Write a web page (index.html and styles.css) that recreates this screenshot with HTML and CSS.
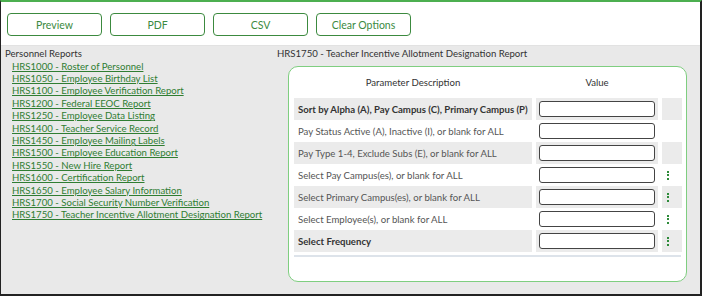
FILE: index.html
```html
<!DOCTYPE html>
<html lang="en">
<head>
    <meta charset="UTF-8">
    <title>HRS Reports</title>
    <link rel="stylesheet" href="styles.css">
</head>
<body>

<div class="frame">

    <!-- Toolbar -->
    <div class="toolbar">
        <button class="tool-btn">Preview</button>
        <button class="tool-btn">PDF</button>
        <button class="tool-btn">CSV</button>
        <button class="tool-btn">Clear Options</button>
    </div>

    <div class="main">
        <!-- Report list -->
        <div class="report-list">
            <div class="list-title">Personnel Reports</div>
            <a href="#">HRS1000 - Roster of Personnel</a>
            <a href="#">HRS1050 - Employee Birthday List</a>
            <a href="#">HRS1100 - Employee Verification Report</a>
            <a href="#">HRS1200 - Federal EEOC Report</a>
            <a href="#">HRS1250 - Employee Data Listing</a>
            <a href="#">HRS1400 - Teacher Service Record</a>
            <a href="#">HRS1450 - Employee Mailing Labels</a>
            <a href="#">HRS1500 - Employee Education Report</a>
            <a href="#">HRS1550 - New Hire Report</a>
            <a href="#">HRS1600 - Certification Report</a>
            <a href="#">HRS1650 - Employee Salary Information</a>
            <a href="#">HRS1700 - Social Security Number Verification</a>
            <a href="#">HRS1750 - Teacher Incentive Allotment Designation Report</a>
        </div>

        <!-- Parameters -->
        <div class="report-detail">
            <div class="report-title">HRS1750 - Teacher Incentive Allotment Designation Report</div>
            <div class="panel">
                <div class="param-head">
                    <div>Parameter Description</div>
                    <div>Value</div>
                    <div></div>
                </div>

                <div class="param-row shaded">
                    <div class="label bold">Sort by Alpha (A), Pay Campus (C), Primary Campus (P)</div>
                    <div class="value"><input type="text"></div>
                    <div class="extra"></div>
                </div>
                <div class="param-row">
                    <div class="label">Pay Status Active (A), Inactive (I), or blank for ALL</div>
                    <div class="value"><input type="text"></div>
                    <div class="extra"></div>
                </div>
                <div class="param-row shaded">
                    <div class="label">Pay Type 1-4, Exclude Subs (E), or blank for ALL</div>
                    <div class="value"><input type="text"></div>
                    <div class="extra"></div>
                </div>
                <div class="param-row">
                    <div class="label">Select Pay Campus(es), or blank for ALL</div>
                    <div class="value"><input type="text"></div>
                    <div class="extra"><span class="kebab"><i></i><i></i><i></i></span></div>
                </div>
                <div class="param-row shaded">
                    <div class="label">Select Primary Campus(es), or blank for ALL</div>
                    <div class="value"><input type="text"></div>
                    <div class="extra"><span class="kebab"><i></i><i></i><i></i></span></div>
                </div>
                <div class="param-row">
                    <div class="label">Select Employee(s), or blank for ALL</div>
                    <div class="value"><input type="text"></div>
                    <div class="extra"><span class="kebab"><i></i><i></i><i></i></span></div>
                </div>
                <div class="param-row shaded">
                    <div class="label bold">Select Frequency</div>
                    <div class="value"><input type="text"></div>
                    <div class="extra"><span class="kebab"><i></i><i></i><i></i></span></div>
                </div>

                <div class="panel-rule"></div>
            </div>
        </div>
    </div>

</div>

</body>
</html>
```

FILE: styles.css
```css
* {
    box-sizing: border-box;
}

body {
    margin: 0;
    font-family: Lato, "Open Sans", sans-serif;
    font-size: 9.6px;
    color: #333;
}

.frame {
    width: 702px;
    height: 296px;
    border-top: 2px solid #4caf50;
    border-left: 1px solid #222;
    border-right: 2px solid #222;
    border-bottom: 2px solid #222;
    background-color: #e9e9e9;
    display: flex;
    flex-direction: column;
    overflow: hidden;
}

/* Toolbar */
.toolbar {
    height: 44px;
    background-color: #fff;
    border-bottom: 1px solid #e2e2e2;
    display: flex;
    gap: 8px;
    padding: 11px 0 0 6px;
}

.tool-btn {
    width: 95px;
    height: 23px;
    background-color: #fff;
    border: 1px solid #3c8a3f;
    border-radius: 4px;
    color: #3c8a3f;
    font-family: inherit;
    font-size: 10.5px;
    padding: 0;
}

.main {
    flex: 1;
    display: flex;
}

/* Report list */
.report-list {
    width: 276px;
    padding: 2px 0 0 4px;
    display: flex;
    flex-direction: column;
}

.list-title {
    color: #333;
    line-height: 12px;
    margin-bottom: 0.5px;
}

.report-list a {
    color: #2f7d32;
    margin-left: 7px;
    line-height: 12.4px;
    text-decoration: underline;
}

/* Parameters */
.report-detail {
    flex: 1;
    padding: 2px 13px 0 0;
}

.report-title {
    color: #333;
    line-height: 12px;
}

.panel {
    margin: 6px 0 0 11px;
    height: 216px;
    background-color: #fff;
    border: 1.5px solid #7fce80;
    border-radius: 10px;
    padding: 10px 4px 0 5px;
}

.param-head,
.param-row {
    display: grid;
    grid-template-columns: 238px 122px 20px;
    column-gap: 4px;
}

.param-head {
    height: 12px;
    line-height: 12px;
    margin-bottom: 9px;
    text-align: center;
    color: #333;
}

.param-row {
    height: 22px;
}

.param-row > div {
    display: flex;
    align-items: center;
}

.param-row.shaded > div {
    background-color: #ebebeb;
}

.label {
    padding-left: 4px;
    color: #555;
    white-space: nowrap;
}

.label.bold {
    font-weight: bold;
    color: #333;
}

.value {
    justify-content: center;
}

.value input {
    width: 116px;
    height: 16px;
    border: 1px solid #444;
    border-radius: 3px;
    background-color: #fff;
    padding: 0;
}

.extra {
    padding-left: 5px;
}

.kebab {
    display: flex;
    flex-direction: column;
    gap: 1.5px;
}

.kebab i {
    width: 2px;
    height: 2px;
    background-color: #2e8b3a;
}

.panel-rule {
    margin-top: 3px;
    height: 2px;
    background-color: #dde3ea;
    margin-right: 1px;
}
```
